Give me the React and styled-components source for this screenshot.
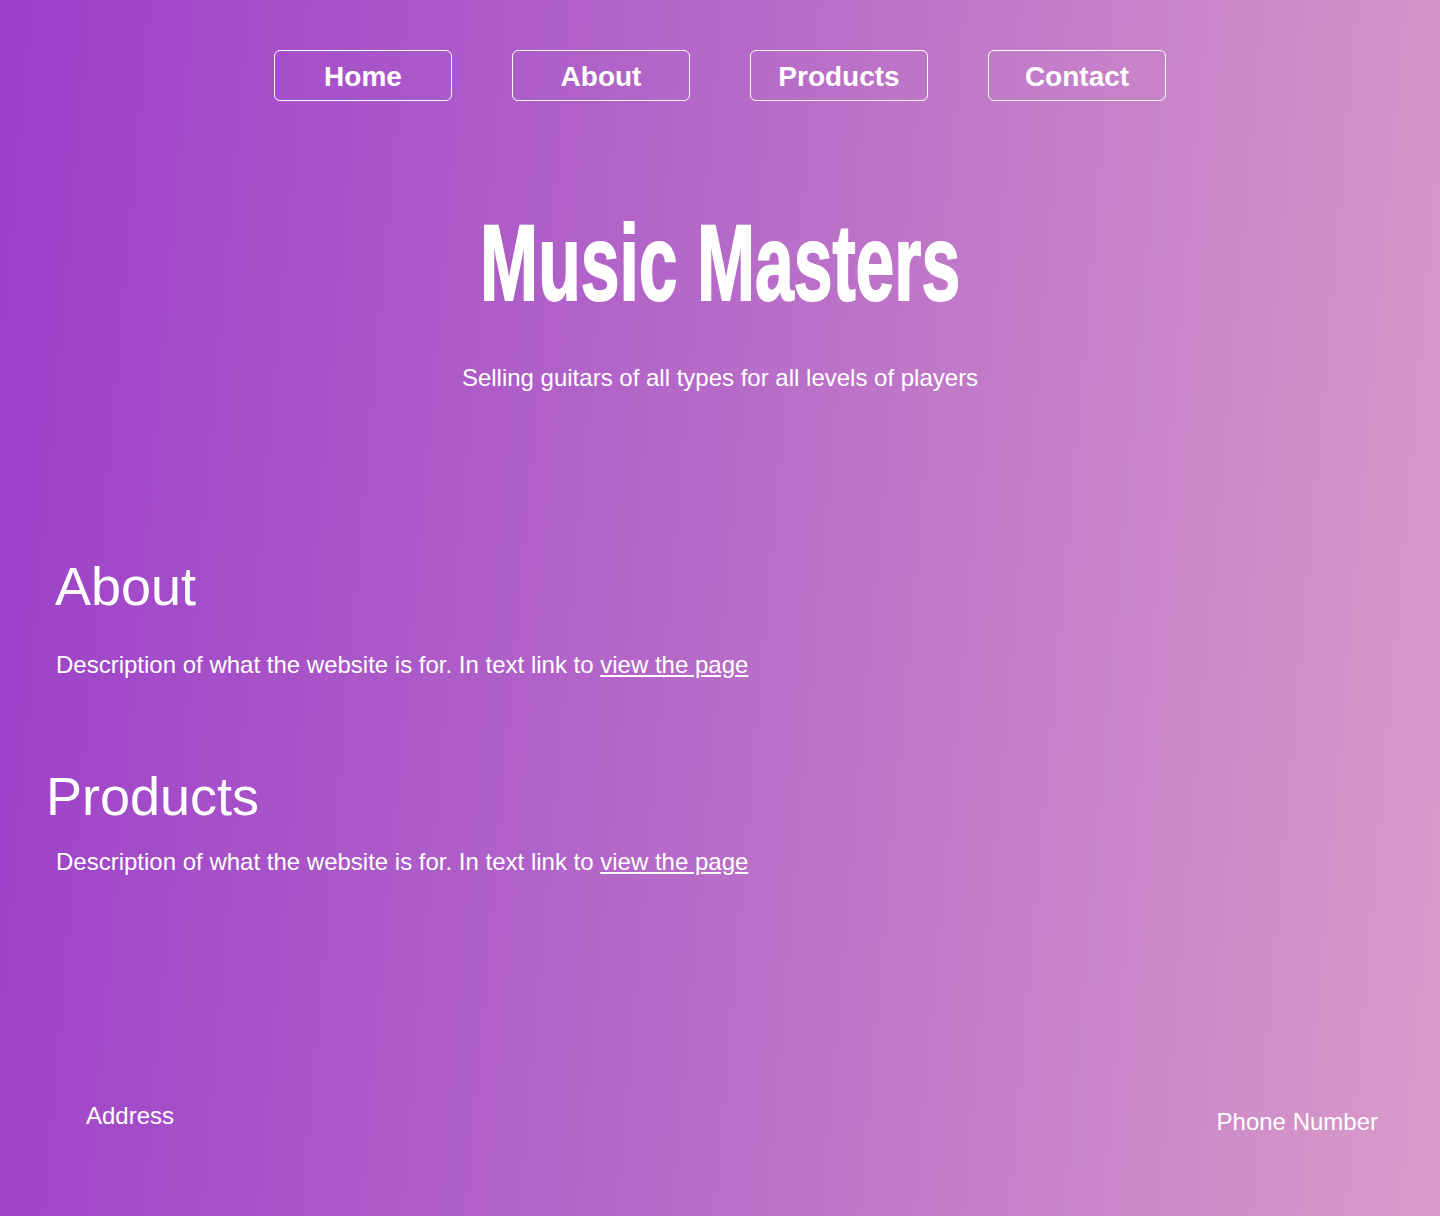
import React from 'react'
import styled, { createGlobalStyle } from "styled-components"

const GlobalStyle = createGlobalStyle`
  html, body {
    margin: 0;
    padding: 0;
  }
  body {
    font-family: "Liberation Sans", Arial, sans-serif;
    color: white;
  }
`

const links = ["Home", "About", "Products", "Contact"]

const App = () => {
    return (
        <Page>
            <GlobalStyle />
            <Nav>
                {links.map((l) => (
                    <NavButton key={l} href={"#" + l.toLowerCase()}>{l}</NavButton>
                ))}
            </Nav>

            <Hero>
                <Title><TitleText>Music Masters</TitleText></Title>
                <Tagline>Selling guitars of all types for all levels of players</Tagline>
            </Hero>

            <Section id="about">
                <Heading indent={55}>About</Heading>
                <Text gap={38}>
                    Description of what the website is for. In text link to <Link href="#about">view the page</Link>
                </Text>
            </Section>

            <Section id="products" top={90}>
                <Heading indent={46}>Products</Heading>
                <Text gap={25}>
                    Description of what the website is for. In text link to <Link href="#products">view the page</Link>
                </Text>
            </Section>

            <Footer>
                <FooterItem>Address</FooterItem>
                <FooterItem offset={6}>Phone Number</FooterItem>
            </Footer>
        </Page>
    )
}

export default App

const Page = styled.div`
min-height: 100vh;
width: 100%;
box-sizing: border-box;
background: linear-gradient(95deg, #9b3fc9 0%, #b467c8 45%, #d99bc9 100%);
display: flex;
flex-direction: column;
padding-top: 50px;
padding-bottom: 80px;
`

const Nav = styled.nav`
display: flex;
justify-content: center;
gap: 60px;
`

const NavButton = styled.a`
width: 178px;
height: 51px;
box-sizing: border-box;
border: 1px solid white;
border-radius: 6px;
padding-top: 2px;
display: flex;
justify-content: center;
align-items: center;
color: white;
text-decoration: none;
font-weight: bold;
font-size: 28px;
`

const Hero = styled.header`
display: flex;
flex-direction: column;
align-items: center;
margin-top: 108px;
`

const Title = styled.h1`
margin: 0;
font-family: "Liberation Sans", sans-serif;
font-size: 108px;
line-height: 1;
font-weight: bold;
`

const TitleText = styled.span`
display: inline-block;
transform: scaleX(0.645);
-webkit-text-stroke: 2px white;
`

const Tagline = styled.p`
margin: 47px 0 0;
font-size: 24px;
line-height: 28px;
`

const Section = styled.section`
margin-top: ${(p) => p.top || 167}px;
`

const Heading = styled.h2`
margin: 0;
padding-left: ${(p) => p.indent}px;
font-size: 54px;
line-height: 1;
font-weight: normal;
`

const Text = styled.p`
margin: ${(p) => p.gap}px 0 0;
padding-left: 56px;
font-size: 24px;
line-height: 28px;
`

const Link = styled.a`
color: white;
text-decoration: underline;
`

const Footer = styled.footer`
margin-top: auto;
display: flex;
justify-content: space-between;
align-items: flex-start;
padding: 0 62px 0 86px;
`

const FooterItem = styled.div`
font-size: 24px;
line-height: 28px;
margin-top: ${(p) => p.offset || 0}px;
`
